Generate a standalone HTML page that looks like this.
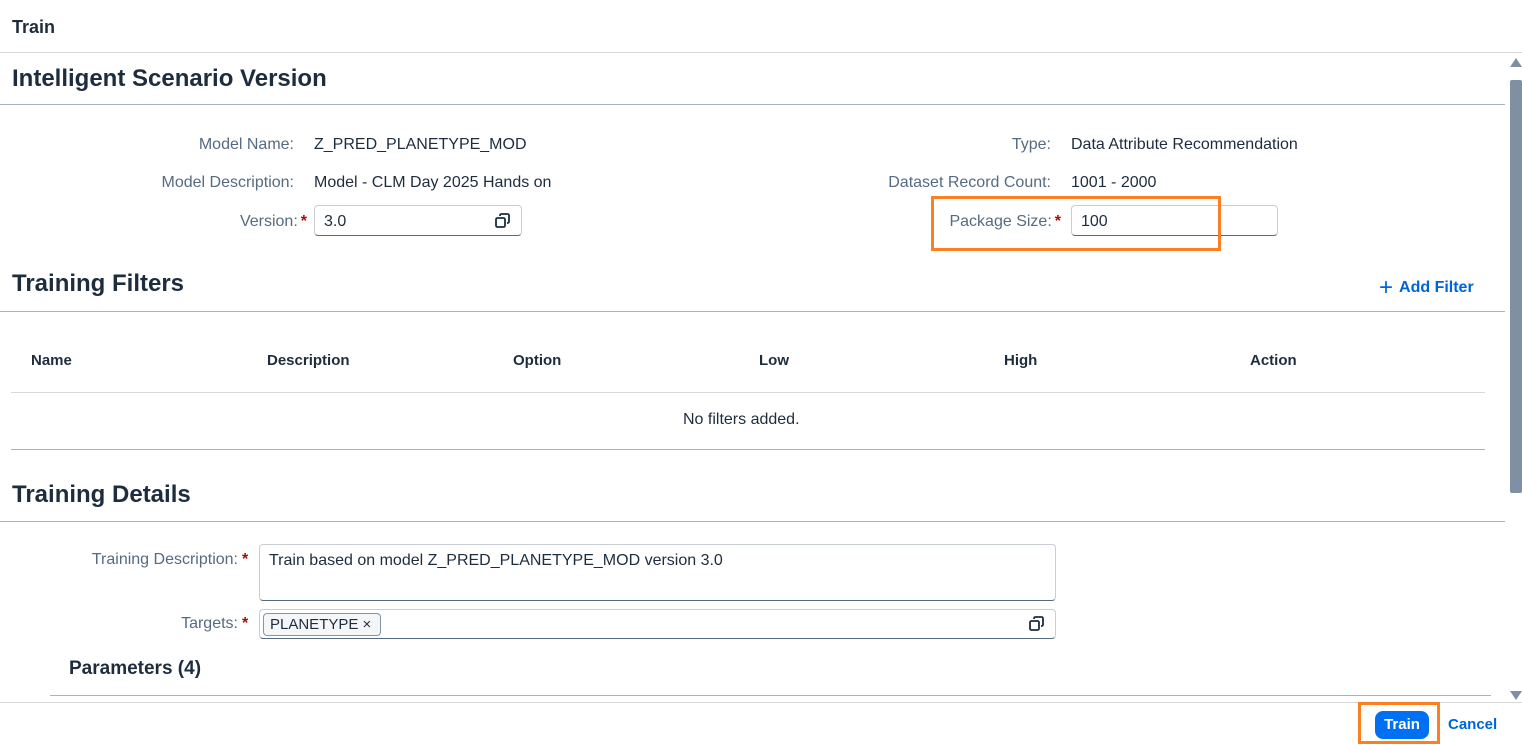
<!DOCTYPE html>
<html><head><meta charset="utf-8"><style>
*{margin:0;padding:0;box-sizing:border-box}
body{width:1522px;height:745px;position:relative;overflow:hidden;background:#fff;font-family:"Liberation Sans",Arial,sans-serif;color:#1d2d3e}
.a{position:absolute;white-space:nowrap}
.h{font-weight:bold;font-size:24px;color:#1d2d3e}
.l{font-size:16px;color:#556b82;text-align:right}
.v{font-size:16px;color:#1d2d3e}
.st{color:#aa0808;font-weight:bold}
.line{position:absolute;height:1px;background:#a8b3bd}
.inp{position:absolute;border:1px solid #c9ced4;border-bottom:1px solid #556b82;border-radius:4px;background:#fff}
.th{font-size:15px;font-weight:bold;color:#1d2d3e}
.or{position:absolute;border:3px solid #fd7e23}
</style></head><body>
<div class="a" style="left:12px;top:17px;font-size:18px;font-weight:bold">Train</div>
<div class="line" style="left:0;top:52px;width:1522px;background:#d9d9d9"></div>

<div class="a h" style="left:12px;top:65px">Intelligent Scenario Version</div>
<div class="line" style="left:0;top:104px;width:1505px"></div>

<div class="a l" style="right:1228px;top:136px">Model Name:</div>
<div class="a v" style="left:314px;top:136px">Z_PRED_PLANETYPE_MOD</div>
<div class="a l" style="right:1228px;top:174px">Model Description:</div>
<div class="a v" style="left:314px;top:174px">Model - CLM Day 2025 Hands on</div>
<div class="a l" style="right:1215px;top:213px">Version:<span class="st" style="margin-left:3px">*</span></div>
<div class="inp" style="left:314px;top:205px;width:208px;height:31px"></div>
<div class="a v" style="left:324px;top:213px">3.0</div>
<svg class="a" style="left:494px;top:212px" width="17" height="17" viewBox="0 0 17 17" fill="none" stroke="#1d2d3e" stroke-width="1.8"><rect x="2" y="6" width="9" height="9" rx="1.5"/><path d="M6 4V3.5A1.5 1.5 0 0 1 7.5 2H13.5A1.5 1.5 0 0 1 15 3.5V9.5A1.5 1.5 0 0 1 13.5 11H13"/></svg>

<div class="a l" style="right:471px;top:136px">Type:</div>
<div class="a v" style="left:1071px;top:136px">Data Attribute Recommendation</div>
<div class="a l" style="right:471px;top:174px">Dataset Record Count:</div>
<div class="a v" style="left:1071px;top:174px">1001 - 2000</div>
<div class="a l" style="right:461px;top:213px">Package Size:<span class="st" style="margin-left:3px">*</span></div>
<div class="inp" style="left:1071px;top:205px;width:207px;height:31px"></div>
<div class="a v" style="left:1081px;top:213px">100</div>
<div class="or" style="left:931px;top:196px;width:290px;height:55px"></div>

<div class="a h" style="left:12px;top:270px">Training Filters</div>
<div class="a" style="left:1379px;top:274px;font-size:16px;font-weight:bold;color:#0064d9"><span style="font-size:24px;font-weight:normal;vertical-align:-3px;margin-right:6px">+</span>Add Filter</div>
<div class="line" style="left:0;top:311px;width:1505px"></div>
<div class="a th" style="left:31px;top:352px">Name</div>
<div class="a th" style="left:267px;top:352px">Description</div>
<div class="a th" style="left:513px;top:352px">Option</div>
<div class="a th" style="left:759px;top:352px">Low</div>
<div class="a th" style="left:1004px;top:352px">High</div>
<div class="a th" style="left:1250px;top:352px">Action</div>
<div class="line" style="left:11px;top:392px;width:1474px;background:#d5dadd"></div>
<div class="a v" style="left:683px;top:411px">No filters added.</div>
<div class="line" style="left:11px;top:449px;width:1474px"></div>

<div class="a h" style="left:12px;top:481px">Training Details</div>
<div class="line" style="left:0;top:521px;width:1505px"></div>
<div class="a l" style="right:1284px;top:551px">Training Description:</div>
<div class="a st" style="left:242px;top:551px;font-size:16px">*</div>
<div class="inp" style="left:259px;top:544px;width:797px;height:57px"></div>
<div class="a v" style="left:269px;top:552px">Train based on model Z_PRED_PLANETYPE_MOD version 3.0</div>
<div class="a l" style="right:1284px;top:615px">Targets:</div>
<div class="a st" style="left:242px;top:615px;font-size:16px">*</div>
<div class="inp" style="left:259px;top:609px;width:797px;height:30px"></div>
<div class="a" style="left:263px;top:613px;width:118px;height:23px;border:1px solid #8396a8;border-radius:4px;background:#f5f6f7;font-size:15px;padding:2px 0 0 6px">PLANETYPE ×</div>
<svg class="a" style="left:1028px;top:615px" width="17" height="17" viewBox="0 0 17 17" fill="none" stroke="#1d2d3e" stroke-width="1.8"><rect x="2" y="6" width="9" height="9" rx="1.5"/><path d="M6 4V3.5A1.5 1.5 0 0 1 7.5 2H13.5A1.5 1.5 0 0 1 15 3.5V9.5A1.5 1.5 0 0 1 13.5 11H13"/></svg>
<div class="a" style="left:69px;top:658px;font-size:19px;font-weight:bold">Parameters (4)</div>
<div class="line" style="left:50px;top:695px;width:1441px"></div>

<div class="a" style="left:1510px;top:58px;width:0;height:0;border-left:6px solid transparent;border-right:6px solid transparent;border-bottom:9px solid #7f8fa4"></div>
<div class="a" style="left:1510px;top:80px;width:12px;height:413px;background:#7f8fa4;border-radius:2px"></div>
<div class="a" style="left:1510px;top:691px;width:0;height:0;border-left:6px solid transparent;border-right:6px solid transparent;border-top:9px solid #7f8fa4"></div>

<div class="line" style="left:0;top:702px;width:1522px;background:#d9d9d9"></div>
<div class="a" style="left:1375px;top:711px;width:54px;height:28px;background:#0070f2;border-radius:8px;color:#fff;font-weight:bold;font-size:15px;text-align:center;line-height:28px">Train</div>
<div class="or" style="left:1358px;top:702px;width:82px;height:42px"></div>
<div class="a" style="left:1448px;top:716px;font-size:15px;font-weight:bold;color:#0064d9">Cancel</div>
</body></html>
